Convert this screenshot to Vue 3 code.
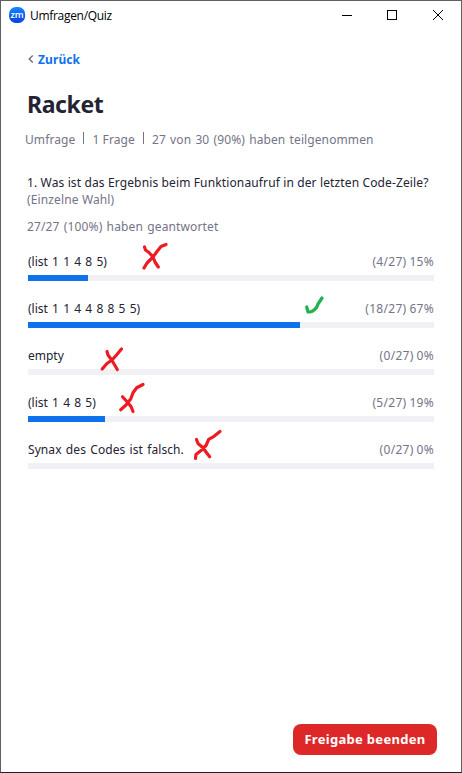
<script setup>
const answers = [
  { text: '(list 1 1 4 8 5)', votes: 4, percent: 15, fill: 60, cls: 'a1', correct: false,
    mark: 'M2.5 4 L3.5 7 L7 9.5 L11 14 L13 19 L16.3 24 M24 1.5 L19 3.5 L15 8.5 L11 14 L5 20 L2 25' },
  { text: '(list 1 1 4 4 8 8 5 5)', votes: 18, percent: 67, fill: 272, cls: 'a2', correct: true,
    mark: 'M1.7 11 L3 16 L5 16 C9 15 12 11.5 13 8 L15 5 L17 2' },
  { text: 'empty', votes: 0, percent: 0, fill: 0, cls: 'a3', correct: false,
    mark: 'M6 4.5 L7 8 L10.7 13 L16.3 22.5 M20.5 2 L15.7 7.7 L11 13 L5.7 16.7 L1.2 22' },
  { text: '(list 1 4 8 5)', votes: 5, percent: 19, fill: 77, cls: 'a4', correct: false,
    mark: 'M3.5 13.7 L8.3 19 L12 23.5 L14 28.5 M24 1.5 L17.7 4.7 L14 9.7 L11.7 16 L7 22 L1.7 26.7' },
  { text: 'Synax des Codes ist falsch.', votes: 0, percent: 0, fill: 0, cls: 'a5', correct: false,
    mark: 'M2.5 9.5 L4 13.5 L9.3 18 L12 22 L15.7 26.7 M26 1.5 L20 6.3 L14.7 9.3 L12 15.5 L7 20.5 L2 24.5 L1.5 28.5' },
]
</script>

<template>
  <div class="window">
    <header class="titlebar">
      <svg class="logo" width="17" height="17" viewBox="0 0 17 17">
        <defs>
          <linearGradient id="logoBlue" x1="0" y1="0" x2="0" y2="1">
            <stop offset="0" stop-color="#1687ff" />
            <stop offset="0.55" stop-color="#075df0" />
            <stop offset="1" stop-color="#0646d8" />
          </linearGradient>
        </defs>
        <rect x="0.1" y="0.1" width="16" height="16" rx="6.8" fill="url(#logoBlue)" />
        <text x="8.1" y="10.6" text-anchor="middle" class="logo-text">zm</text>
      </svg>
      <span class="app-name">Umfragen/Quiz</span>
      <svg class="controls" width="102" height="12" viewBox="0 0 102 12" fill="none" stroke="#000">
        <path d="M0 5.5 H10 M45.5 .5 H54.5 V9.5 H45.5 Z" shape-rendering="crispEdges" />
        <path d="M91 0 L101 10 M101 0 L91 10" />
      </svg>
    </header>

    <main>
      <nav class="back">
        <svg width="6" height="8" viewBox="0 0 6 8" fill="none" stroke="#6e6e80" stroke-width="1.4">
          <path d="M4.8 .6 L1.2 4 L4.8 7.4" />
        </svg>
        <span class="back-label">Zurück</span>
      </nav>
      <h1>Racket</h1>
      <div class="meta">
        <span class="m1">Umfrage</span><i></i><span class="m2">1 Frage</span><i></i>
        <span class="m3">27 von 30 (90%) haben teilgenommen</span>
      </div>
      <p class="question">1. Was ist das Ergebnis beim Funktionaufruf in der letzten Code-Zeile?</p>
      <p class="kind">(Einzelne Wahl)</p>
      <p class="answered">27/27 (100%) haben geantwortet</p>

      <section v-for="a in answers" :key="a.cls" class="answer" :class="a.cls">
        <div class="line">
          <span class="label">{{ a.text }}</span>
          <span class="count">({{ a.votes }}/27) {{ a.percent }}%</span>
        </div>
        <div class="track"><div class="fill" :style="{ width: a.fill + 'px' }"></div></div>
        <svg class="mark" width="30" height="31" viewBox="0 0 30 31" fill="none"
             :stroke="a.correct ? '#22b14c' : '#ed1c24'" stroke-width="3.2" stroke-linecap="round" stroke-linejoin="round">
          <path :d="a.mark" />
        </svg>
      </section>
    </main>

    <footer><button>Freigabe beenden</button></footer>
  </div>
</template>

<style>
body { margin: 0; background: #fff; }
</style>

<style scoped>
.window {
  box-sizing: border-box; width: 462px; height: 773px; background: #fff;
  border: 1px solid #606060; border-bottom-color: #202020;
  display: flex; flex-direction: column;
  font-family: "Noto Sans", "Open Sans", sans-serif; font-size: 12px; color: #232333;
  white-space: nowrap; overflow: hidden;
}
.titlebar { height: 29px; flex: none; display: flex; align-items: flex-start; padding: 0 17px 0 8px; }
.logo { flex: none; margin-top: 6px; }
.logo-text { font: 600 9.3px "Open Sans", sans-serif; fill: #fff; }
.app-name { margin: 6px 0 0 4px; font-family: "Open Sans", sans-serif; color: #000; letter-spacing: -.3px; line-height: 18px; }
.controls { margin: 9px 0 0 auto; }
main { padding: 18px 27px 0 26px; flex: 1; }
.back { display: flex; align-items: center; height: 22px; gap: 4px; padding-left: 1px; }
.back-label { color: #0e72ed; font-weight: 700; letter-spacing: .1px; }
h1 { margin: 18px 0 0; font-size: 23px; line-height: 32px; font-weight: 700; letter-spacing: -.4px; }
.meta { display: flex; align-items: center; height: 20px; margin: 9px 0 0 -2px; color: #747487; }
.meta i { width: 1px; height: 12px; background: #747487; margin: 0 8px 3px 8px; }
.m1, .m2 { letter-spacing: .1px; }
.m3 { letter-spacing: .1px; word-spacing: 1px; }
p { margin: 0; height: 17px; line-height: 17px; }
.question { margin-top: 25px; letter-spacing: .13px; }
.kind, .answered { color: #747487; }
.kind { letter-spacing: .13px; }
.answered { margin-top: 10px; letter-spacing: .13px; word-spacing: 1px; }
.answer { position: relative; height: 47px; margin-left: 1px; }
.a1 { margin-top: 16px; }
.line { display: flex; justify-content: space-between; height: 20px; line-height: 22px; }
.label { word-spacing: 1.1px; }
.a5 .label { letter-spacing: .07px; }
.count { color: #747487; letter-spacing: .3px; word-spacing: -.5px; }
.track { height: 6px; margin-top: 4px; background: #f0f0f5; }
.fill { height: 6px; background: #0e72ed; }
.mark { position: absolute; overflow: visible; }
.a1 .mark { left: 114px; top: -8px; }
.a2 .mark { left: 277px; top: -2px; }
.a3 .mark { left: 73px; top: 2px; }
.a4 .mark { left: 91px; top: -9px; }
.a5 .mark { left: 166px; top: -9px; }
footer { display: flex; justify-content: flex-end; padding: 0 24px 17px 0; }
button {
  width: 144px; height: 31px; padding: 0; border: 0; border-radius: 8px; background: #de2828; color: #fff;
  font: 700 13px "Noto Sans", sans-serif; line-height: 31px; letter-spacing: .3px;
}
</style>
